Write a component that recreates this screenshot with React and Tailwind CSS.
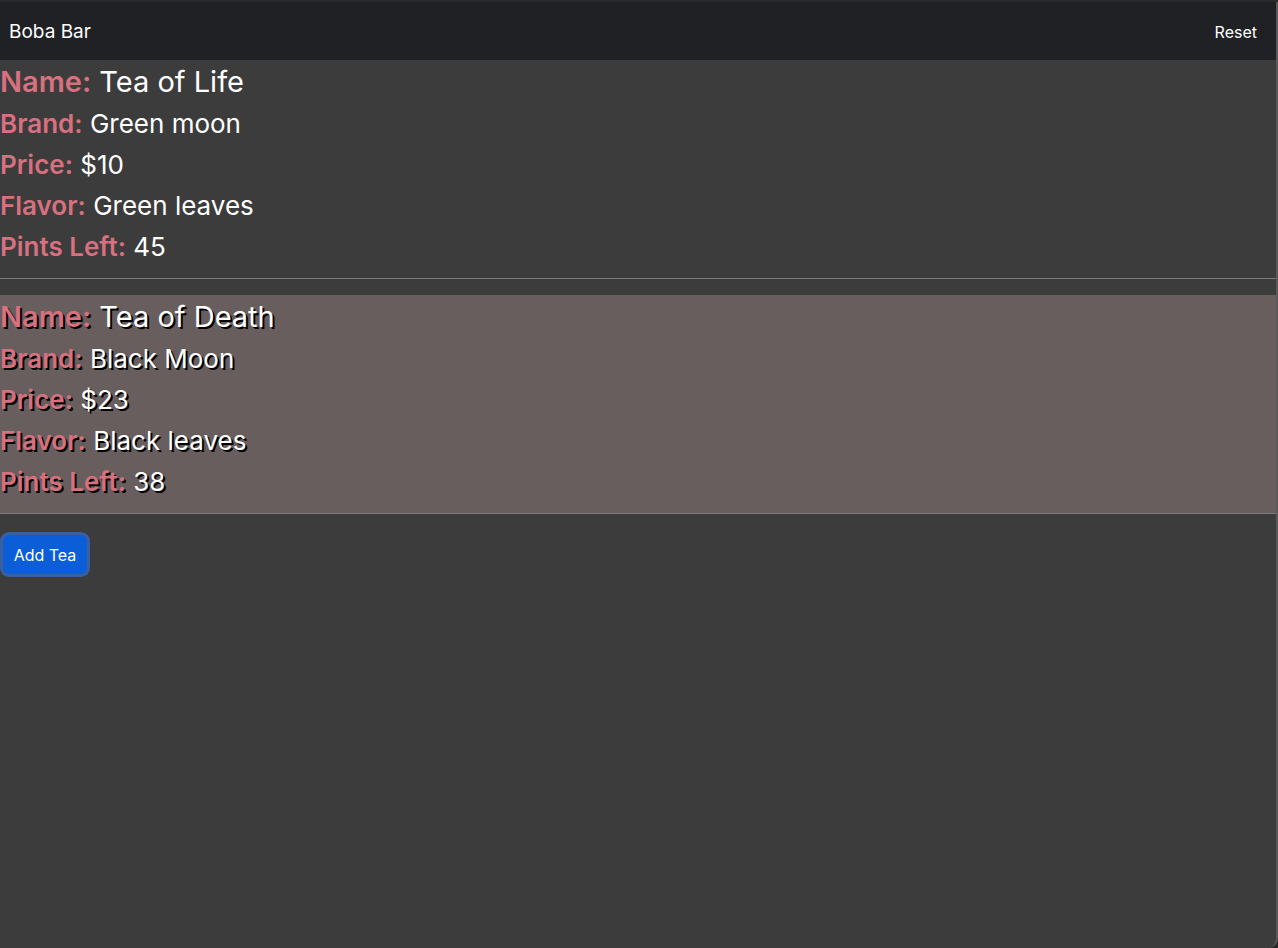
import React, { useState } from 'react';

const initialTeas = [
    { id: 1, name: 'Tea of Life', brand: 'Green moon', price: 10, flavor: 'Green leaves', pints: 45 },
    { id: 2, name: 'Tea of Death', brand: 'Black Moon', price: 23, flavor: 'Black leaves', pints: 38 },
];

// one label/value line of a tea card
const Field = ({ label, value, big, shadow }) => (
    <div
        className={`${big ? 'text-[29px] leading-[43px]' : 'text-[26px] leading-[41px]'} whitespace-nowrap ${
            shadow ? '[text-shadow:2px_2px_0_#000]' : ''
        }`}
    >
        <span className="font-semibold text-[#d7707f]">{label}:</span>{' '}
        <span className="text-white">{value}</span>
    </div>
);

const TeaCard = ({ tea, selected, onSelect }) => (
    <div
        onClick={() => onSelect(tea.id)}
        className={`h-[219px] border-b border-[#7b7b7b] mb-4 cursor-pointer ${selected ? 'bg-[#685e5e]' : ''}`}
    >
        <Field label="Name" value={tea.name} big shadow={selected} />
        <Field label="Brand" value={tea.brand} shadow={selected} />
        <Field label="Price" value={`$${tea.price}`} shadow={selected} />
        <Field label="Flavor" value={tea.flavor} shadow={selected} />
        <Field label="Pints Left" value={tea.pints} shadow={selected} />
    </div>
);

const App = () => {
    const [teas, setTeas] = useState(initialTeas);
    const [selectedId, setSelectedId] = useState(2);

    const handleReset = () => {
        setTeas(initialTeas);
        setSelectedId(null);
    };

    return (
        <div className="h-[948px] w-full bg-[#2a2a2a] pt-[2px] font-['Inter',sans-serif] overflow-hidden">
            <div className="h-full bg-[#3c3c3c] border-r-2 border-[#5a5a5a] rounded-br-[10px] flex flex-col">
                {/* --- Navbar --- */}
                <nav className="h-[58px] shrink-0 bg-[#1f2124] flex items-center justify-between pl-[9px] pr-[19px]">
                    <span className="text-[19px] text-white pt-[3px]">Boba Bar</span>
                    <button onClick={handleReset} className="text-[16px] text-white pt-[1px]">
                        Reset
                    </button>
                </nav>

                {/* --- Tea list --- */}
                <div>
                    {teas.map(tea => (
                        <TeaCard key={tea.id} tea={tea} selected={tea.id === selectedId} onSelect={setSelectedId} />
                    ))}
                </div>

                <div className="pt-[5px]">
                    <button className="ml-[3px] h-[39px] w-[84px] rounded-[6px] bg-[#0b5ed7] text-[16px] text-white ring-[3px] ring-[#3b5f9f]">
                        Add Tea
                    </button>
                </div>
            </div>
        </div>
    );
};

export default App;
